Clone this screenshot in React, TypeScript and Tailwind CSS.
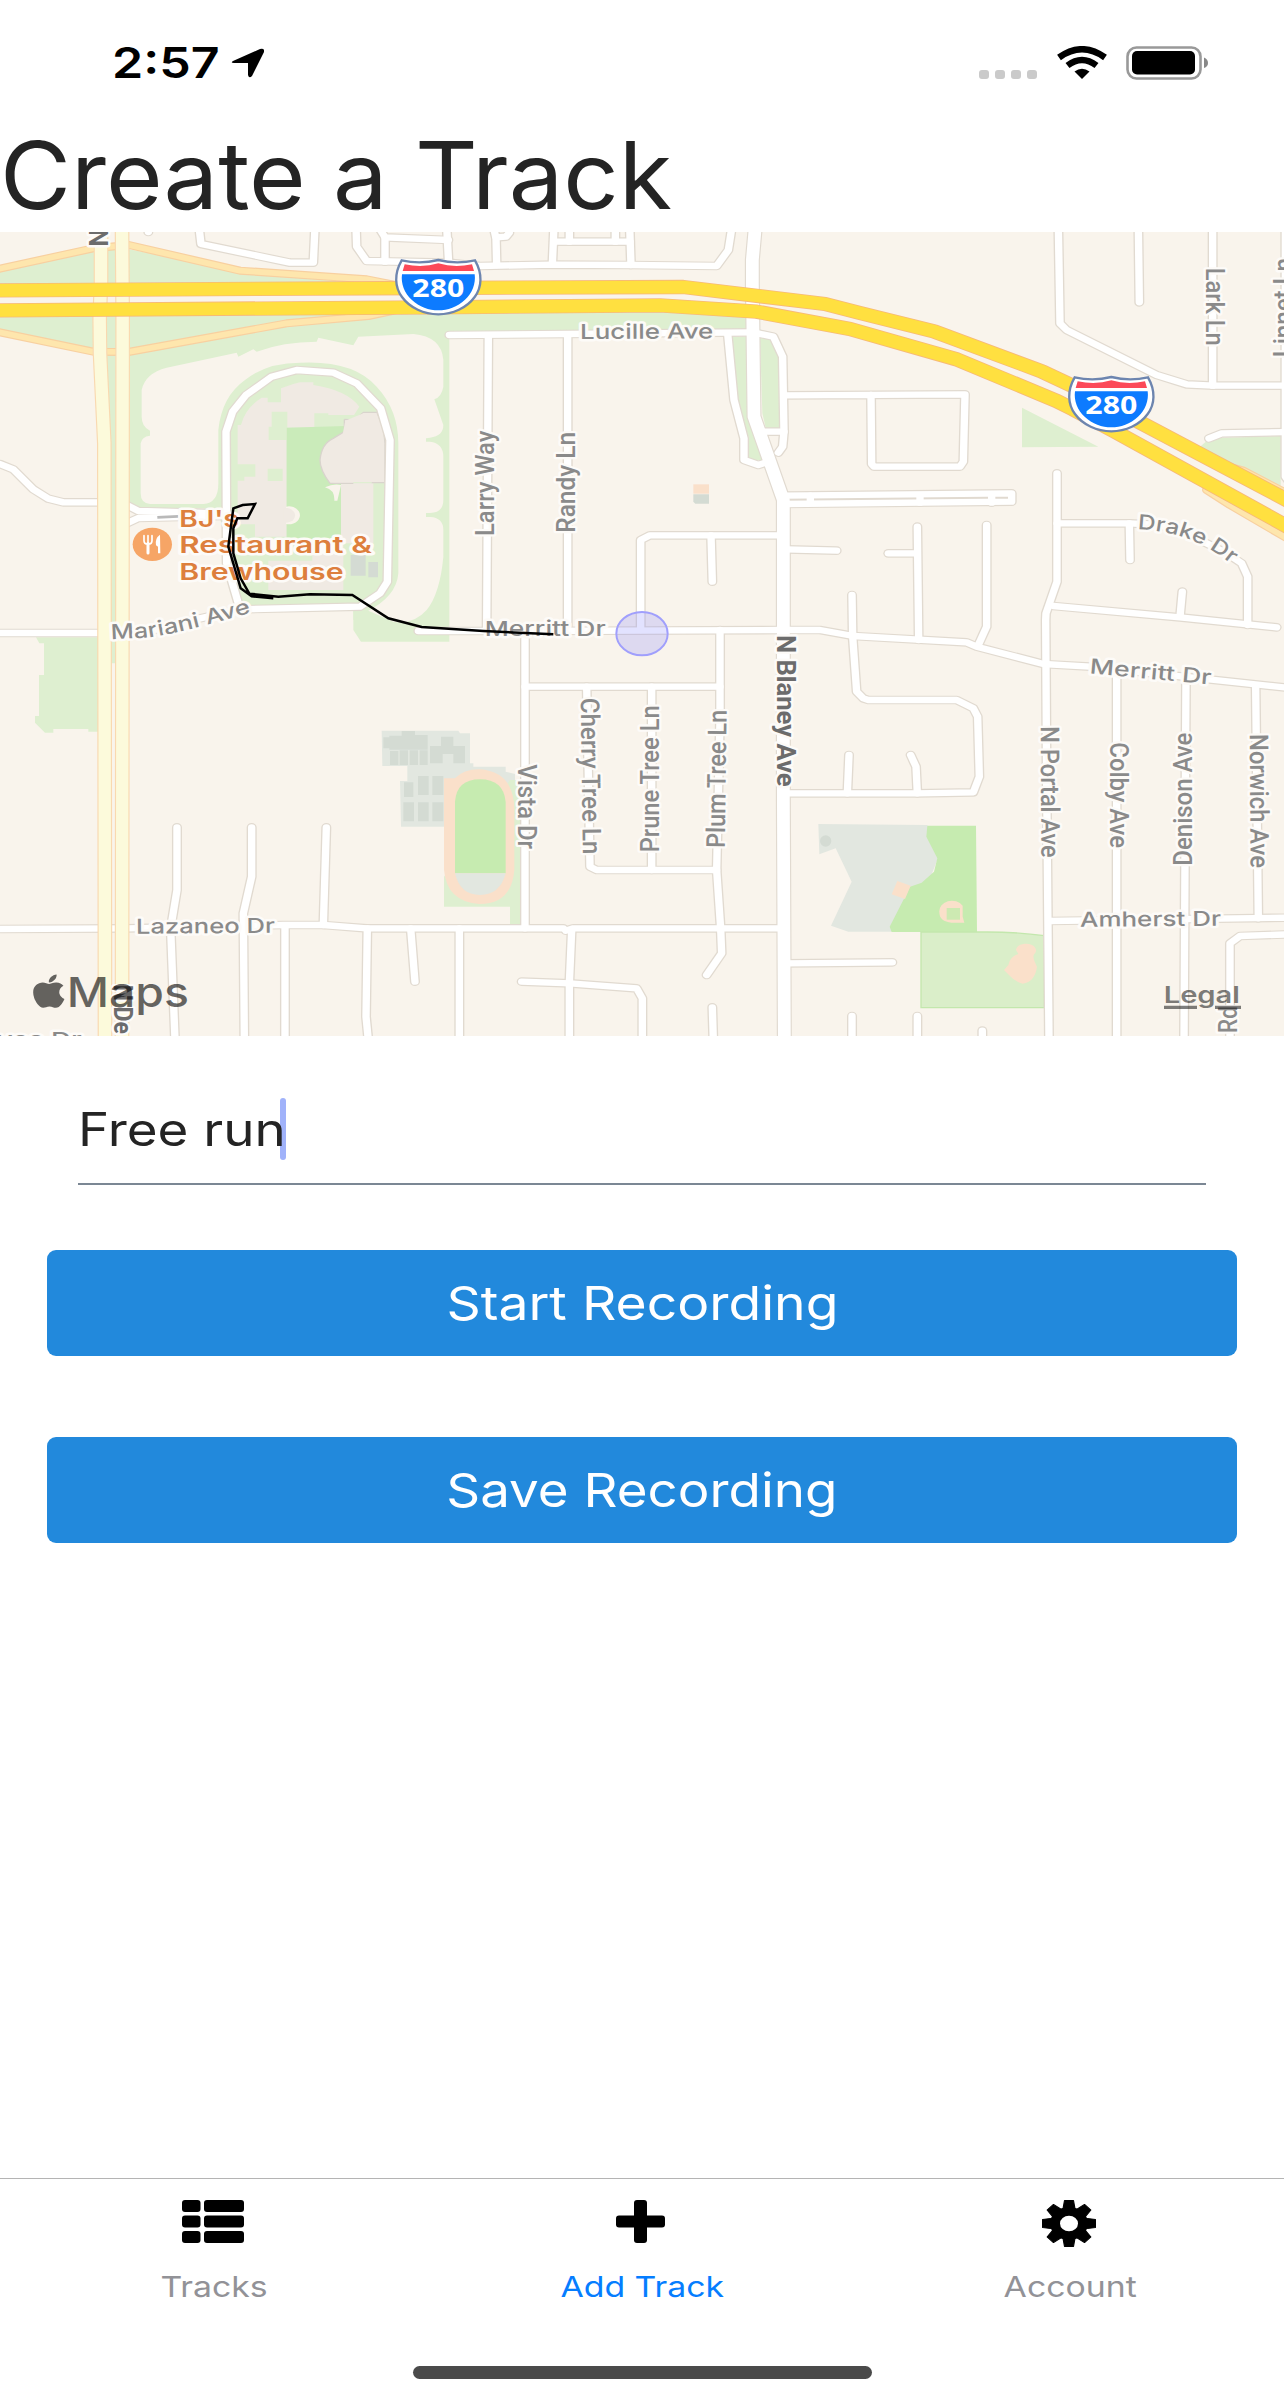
import React from "react";

type Tile = "A" | "B" | "C" | "D" | "E" | "F";
type Line = [Tile, string];

// The map is drawn on a 3 x 2 grid of tiles, each with its own origin.
const ORIGIN: Record<Tile, [number, number]> = {
  A: [0, 0],
  B: [1290, 0],
  C: [2580, 0],
  D: [0, 1170],
  E: [1290, 1170],
  F: [2580, 1170],
};

const STRETCH = 1.158;

// Converts tile points to map points, narrowed so that strokes widen with the stretch group.
function project([tile, pts]: Line): string {
  const [ox, oy] = ORIGIN[tile];
  return pts
    .trim()
    .split(/\s+/)
    .map((p) => {
      const [x, y] = p.split(",").map(Number);
      return `${((x + ox) / STRETCH).toFixed(1)},${y + oy}`;
    })
    .join(" ");
}

const STREETS: Line[] = [
  ["A", "0,702 40,718 100,778 145,806 190,817 300,817"],
  ["A", "380,825 415,843 665,850"],
  ["A", "380,880 415,864 665,858"],
  ["A", "720,1138 680,1000 678,605 698,545 738,495 815,440 890,420 1000,428 1070,460 1142,535 1170,630 1162,1055 1140,1090 1080,1130 720,1138"],
  ["A", "380,1209 480,1197 600,1165 720,1138"],
  ["A", "597,-10 603,42 870,98 940,98 945,-10"],
  ["A", "1068,-10 1070,50 1100,93 1345,98 1440,108 1660,104 1890,105 2150,108 2185,60 2196,-10"],
  ["A", "1135,-10 1155,22 1345,30"],
  ["A", "1155,22 1155,95"],
  ["A", "445,-10 445,6"],
  ["B", "50,-10 56,100"],
  ["B", "190,-10 198,25 200,105"],
  ["B", "198,22 228,20 238,8 235,-10"],
  ["B", "372,-10 367,104"],
  ["B", "372,35 600,35"],
  ["B", "599,-10 603,105"],
  ["B", "418,-10 418,35"],
  ["B", "556,-10 556,35"],
  ["B", "58,315 970,307"],
  ["B", "970,307 1030,320 1058,380 1062,605 1058,650 1045,668"],
  ["B", "1000,605 1062,605"],
  ["B", "893,310 912,510 942,625 942,690 985,705 1015,695"],
  ["B", "175,320 170,1200"],
  ["B", "413,320 413,1200"],
  ["B", "1062,496 1605,493 1600,695 1590,710 1332,710 1325,702 1323,495"],
  ["B", "1060,797 1745,790 1745,815 1060,822"],
  ["B", "632,1200 632,930 660,916 1050,916"],
  ["B", "843,916 847,1055"],
  ["B", "1070,958 1220,962"],
  ["B", "1141,797 1141,820"],
  ["C", "180,797 180,818"],
  ["C", "395,797 395,818"],
  ["C", "595,-10 600,280 620,300 890,435 980,463 1060,467 1290,467"],
  ["C", "835,-10 838,217"],
  ["C", "1058,-10 1058,467"],
  ["C", "1276,-10 1276,740 1290,760"],
  ["C", "1047,625 1085,610 1290,606"],
  ["C", "591,730 591,1055 558,1150 557,1170 560,1670 567,2430"],
  ["C", "591,880 810,880 900,885 1000,920 1100,970 1145,1000 1163,1040 1163,1185"],
  ["C", "808,880 810,990"],
  ["C", "580,1128 960,1162 1250,1192"],
  ["C", "967,1085 960,1160"],
  ["C", "172,890 176,1230"],
  ["C", "85,970 170,970"],
  ["C", "380,885 380,1190 355,1245"],
  ["D", "-10,39 305,39"],
  ["D", "1255,33 1575,33 2350,30 2460,30 2560,48 2900,67 2930,80 3130,132 3270,140 3860,203"],
  ["E", "285,40 285,925"],
  ["E", "285,200 870,200"],
  ["E", "470,200 480,740 500,750 860,750"],
  ["E", "665,200 665,750"],
  ["E", "870,30 870,300 860,750 872,925 875,1000 830,1065"],
  ["D", "-10,927 380,925 850,915 970,915 1100,925 1690,925"],
  ["E", "407,932 430,925 1050,925"],
  ["E", "425,932 418,1090 418,1260"],
  ["E", "275,1085 420,1090 620,1105 637,1135 637,1260"],
  ["E", "88,925 88,1260"],
  ["E", "847,1162 850,1260"],
  ["E", "1070,1030 1387,1027"],
  ["E", "1266,1188 1266,1260"],
  ["E", "1266,-75 1268,50 1280,215 1300,235 1315,240 1580,240 1630,265 1643,290 1648,470 1630,517 1460,520 1070,520"],
  ["E", "1257,405 1252,520"],
  ["F", "152,405 168,440 172,520"],
  ["D", "531,622 531,810 512,925 525,1260"],
  ["D", "755,622 755,770 730,880 733,1260"],
  ["D", "979,622 970,915"],
  ["D", "855,925 855,1260"],
  ["D", "1102,925 1098,1190 1105,1260"],
  ["D", "1232,925 1245,1085"],
  ["F", "770,150 770,1260"],
  ["F", "978,170 972,1260"],
  ["F", "1187,200 1195,895"],
  ["F", "567,903 1290,893"],
  ["F", "1110,1260 1110,970 1140,948 1290,943"],
  ["F", "172,1188 172,1260"],
  ["F", "367,1232 367,1260"],
];

const AVENUE: Line = ["B", "976,-10 967,90 967,160 972,560 1060,810 1060,1700 1063,2430"];
const BOULEVARDS: Line[] = [
  ["A", "303,-10 303,160 299,260 300,370 313,640 315,2430"],
  ["A", "366,-10 368,260 366,2430"],
];
const RAMPS: Line[] = [
  ["A", "-10,118 280,55 387,45 720,122 1100,148 1200,168"],
  ["A", "-10,305 280,365 385,366 860,280 1105,258 1200,238"],
  ["C", "1050,695 1150,722 1290,795"],
  ["C", "1040,780 1110,825 1290,930"],
];
const FREEWAYS: Line[] = [
  ["A", "-10,181 1290,174 2050,171 2475,222 2580,249 2802,304 3125,424 3240,478 3420,577 3870,815"],
  ["A", "-10,241 1290,232 1980,226 2270,245 2550,297 2870,388 3170,513 3220,538 3340,602 3870,894"],
];

function Lines({ items, color, width, round = true }: { items: Line[]; color: string; width: number; round?: boolean }) {
  return (
    <g fill="none" stroke={color} strokeWidth={width} strokeLinejoin="round" strokeLinecap={round ? "round" : "butt"}>
      {items.map((it, i) => (
        <polyline key={i} points={project(it)} />
      ))}
    </g>
  );
}

function Area({ t, d, fill, stroke }: { t: Tile; d: string; fill: string; stroke?: string }) {
  return <path transform={`translate(${ORIGIN[t].join(" ")})`} d={d} fill={fill} stroke={stroke} strokeWidth={stroke ? 4 : undefined} />;
}

interface LabelProps {
  t: Tile;
  x: number;
  y: number;
  len: number;
  rot?: number;
  size?: number;
  weight?: number;
  color?: string;
  font?: string;
  children: string;
}

function Label({ t, x, y, len, rot = 0, size = 62, weight = 500, color = "#8a8a8a", font = "Inter, sans-serif", children }: LabelProps) {
  const [ox, oy] = ORIGIN[t];
  return (
    <text
      transform={`translate(${x + ox} ${y + oy}) rotate(${rot})`}
      fontFamily={font}
      fontSize={size}
      fontWeight={weight}
      fill={color}
      stroke="#fdfbf8"
      strokeWidth={15}
      strokeLinejoin="round"
      paintOrder="stroke"
      textLength={len}
      lengthAdjust="spacingAndGlyphs"
    >
      {children}
    </text>
  );
}

const ROBOTO = "Roboto, sans-serif";

const VERTICAL: { t: Tile; x: number; y: number; len: number; rot: number; text: string; bold?: boolean }[] = [
  { t: "A", x: 268, y: -4, len: 54, rot: 90, text: "N", bold: true },
  { t: "B", x: 193, y: 918, len: 316, rot: -90, text: "Larry Way" },
  { t: "B", x: 434, y: 908, len: 302, rot: -90, text: "Randy Ln" },
  { t: "C", x: 1037, y: 113, len: 234, rot: 90, text: "Lark Ln" },
  { t: "C", x: 1295, y: 382, len: 298, rot: -90, text: "Linnet Ln" },
  { t: "E", x: 264, y: 433, len: 254, rot: 90, text: "Vista Dr" },
  { t: "E", x: 452, y: 234, len: 469, rot: 89.2, text: "Cherry Tree Ln" },
  { t: "E", x: 688, y: 697, len: 441, rot: -90, text: "Prune Tree Ln" },
  { t: "E", x: 884, y: 684, len: 414, rot: -89.2, text: "Plum Tree Ln" },
  { t: "E", x: 1042, y: 45, len: 455, rot: 90, text: "N Blaney Ave", bold: true },
  { t: "F", x: 542, y: 319, len: 394, rot: 89.7, text: "N Portal Ave" },
  { t: "F", x: 751, y: 367, len: 317, rot: 90, text: "Colby Ave" },
  { t: "F", x: 997, y: 737, len: 399, rot: -90, text: "Denison Ave" },
  { t: "F", x: 1169, y: 342, len: 402, rot: 89.6, text: "Norwich Ave" },
  { t: "F", x: 1130, y: 1240, len: 82, rot: -90, text: "Rd" },
  { t: "D", x: 343, y: 1094, len: 148, rot: 90, text: "N De", bold: true },
];

function Shield({ x, y }: { x: number; y: number }) {
  return (
    <g transform={`translate(${x} ${y})`}>
      <path
        d="M17,5 Q72,18 127,4 Q182,18 237,5 C260,45 258,85 236,115 C212,148 170,167 127,167 C84,167 42,148 18,115 C-4,85 -6,45 17,5Z"
        fill="#fff"
        stroke="#6d85af"
        strokeWidth="7"
      />
      <path d="M26,17 Q80,28 127,14 Q174,28 228,17 L234,37 H20Z" fill="#fc4958" />
      <path d="M18,47 H236 C240,75 228,105 207,123 C184,145 155,155 127,155 C99,155 70,145 47,123 C26,105 14,75 18,47Z" fill="#0d7bff" />
      <text x="49" y="116" fontFamily="'Noto Sans', sans-serif" fontWeight="700" fontSize="77" fill="#fff" textLength="156" lengthAdjust="spacingAndGlyphs">
        280
      </text>
    </g>
  );
}

const GREEN = "#deefd0";
const SAND = "#f9f4ec";
const BUILDING = "#f0eae3";
const SLATE = "#d4dbd3";

function Landscape() {
  return (
    <g>
      <Area t="A" fill={GREEN} d="M0,118 L280,58 H387 L720,122 L1150,155 L1290,165 H0Z M0,255 H1290 L387,366 H280 L0,305Z M320,370 H347 V1300 H334Z" />
      <Area t="A" fill={GREEN} d="M387,366 L1290,240 H2240 V305 L1348,315 V1235 H1083 L1060,1200 V1140 L700,835 H387Z" />
      <Area
        t="A"
        fill={SAND}
        d="M425,480 Q435,430 500,413 L710,368 L715,380 L760,358 L770,365 Q850,335 950,335 L955,323 L1060,346 L1075,320 L1240,312 Q1325,320 1330,390 L1330,470 Q1325,500 1303,508 L1330,585 Q1330,618 1290,623 L1278,625 V635 L1290,635 Q1330,640 1330,680 V810 Q1330,848 1290,849 H1278 V861 H1290 Q1330,863 1330,900 V980 Q1320,1090 1280,1140 Q1240,1185 1180,1175 L1100,1140 L700,822 H650 V822 H450 Q422,820 422,790 L422,640 Q425,620 450,617 L450,602 Q425,590 425,560Z"
      />
      <Area t="A" fill={GREEN} d="M655,600 Q665,500 735,450 Q800,398 900,398 Q1060,390 1130,470 Q1195,540 1195,640 L1195,1030 Q1190,1100 1100,1145 L1060,1170 V1130 L720,1150 L690,1000 L655,840 V760 Q655,820 610,822 V835 H655Z" />
      <Area t="A" fill={BUILDING} d="M785,503 H803 V517 H843 V475 L880,462 L900,457 H940 V465 Q1040,480 1078,530 L1062,555 H985 V550 H943 V593 H860 V920 H765 V883 H713 V585 H723 Q735,535 785,503Z" />
      <Area t="A" fill={GREEN} d="M815,545 H862 V593 H860 V630 H806 V590 H815Z M705,703 H766 V740 H733 V752 H705Z M803,716 H848 V753 H803Z" />
      <Area t="A" fill="#caebba" d="M860,593 L1035,588 V760 H1023 V940 L860,925Z" />
      <Area t="A" fill={BUILDING} d="M1023,760 H1120 V940 H1030 V1080 H805 V992 H937 V940 H1023Z" />
      <Area t="A" fill={BUILDING} stroke="#d9d4cd" d="M1033,568 L1065,570 L1090,547 H1130 Q1153,590 1155,640 V758 H1115 M1060,760 H990 Q960,720 960,690 Q965,640 1000,625 L1033,605 V568" />
      <Area t="A" fill={BUILDING} d="M1036,572 L1090,550 H1130 L1152,640 V756 L1000,757Z" />
      <Area t="A" fill={SAND} d="M858,830 a33,27 0 1 1 0,52Z M975,772 Q1000,760 1023,765 L1012,812 L1003,812 Q1005,780 975,772Z" />
      <Area t="A" fill={BUILDING} d="M850,835 a27,22 0 1 1 0,42Z" />
      <Area t="A" fill={SLATE} d="M1052,975 H1097 V1037 H1052Z M1105,996 H1134 V1042 H1105Z" />

      <Area t="B" fill={GREEN} d="M905,320 H950 L957,560 L997,690 H955 V620 L925,510Z M990,320 L1025,330 L1045,380 L1048,597 H1008 L997,550Z" />
      <Area t="B" fill="#fae0ca" d="M790,763 H837 V791 H790Z" />
      <Area t="B" fill={SLATE} d="M790,793 H837 V821 H796 L790,815Z" />
      <Area t="C" fill={GREEN} d="M486,533 L715,650 L486,652Z M1020,650 L1050,625 L1262,618 V768 L1100,700Z" />

      <Area t="D" fill={GREEN} d="M108,52 H295 V335 H265 V327 H160 V338 H135 L105,308 V288 H117 V165 H132 V70 H118Z" />
      <Area t="D" fill="#e2e7e0" d="M1145,332 H1375 L1380,340 H1410 V430 H1420 V440 H1517 V455 L1545,462 V500 L1400,620 H1203 L1200,483 H1222 V438 H1147Z" />
      <Area
        t="D"
        fill={SLATE}
        d="M1150,352 H1168 V347 H1205 V333 H1245 V345 H1283 V389 H1168 V385 H1150Z M1170,393 H1195 V435 H1170Z M1199,391 H1224 V435 H1199Z M1229,391 H1254 V435 H1229Z M1259,391 H1283 V435 H1259Z M1212,487 H1240 V531 H1212Z M1254,468 H1286 V525 H1254Z M1210,547 H1242 V604 H1210Z M1254,547 H1286 V604 H1254Z M1297,468 H1330 V525 H1297Z M1297,547 H1330 V604 H1297Z M1290,378 H1323 V350 H1360 V378 H1395 V430 H1360 V402 H1328 V430 H1290Z"
      />
      <Area t="E" fill={GREEN} d="M42,770 V860 H240 V912 H272 V480 H240Z" />
      <Area t="E" fill="#fae0ca" d="M42,475 H75 Q100,448 148,448 Q253,455 253,570 V750 Q245,852 148,852 Q50,845 42,750Z" />
      <Area t="E" fill="#c6ebb0" d="M75,760 V545 Q80,478 150,478 Q220,478 227,545 V760Z" />
      <Area t="E" fill="#e2e7e0" d="M75,760 H227 Q210,825 150,825 Q90,825 75,760Z" />

      <Area t="F" fill="#e2e7e0" d="M-125,612 L202,615 L240,700 L200,800 L98,935 H-35 L-87,917 L-25,785 L-73,685 L-122,703Z" />
      <Area t="F" fill={SLATE} d="M-120,663 a17,17 0 1 1 34,0 a17,17 0 1 1 -34,0Z" />
      <Area t="F" fill="#c6ebb0" d="M202,617 H348 L351,936 H95 L89,920 L135,830 L150,800 L185,788 L222,755 L232,715 L199,650Z" />
      <Area t="F" fill="#daeec9" stroke="#c3e7ad" d="M183,936 H380 Q470,936 553,947 V1163 H183Z" />
      <Area t="F" fill="#fae0ca" d="M112,783 L152,797 L135,837 L95,823Z M238,877 a38,32 0 0 1 70,-20 V890 L313,908 H275 Q238,905 238,877Z M468,990 a30,20 0 1 1 55,12 Q515,1010 531,1040 Q525,1085 488,1091 Q465,1085 450,1068 L432,1050 L445,1035 Q450,1010 475,1002Z" />
      <Area t="F" fill="#cdeab2" d="M260,864 H300 V899 H260Z" />
    </g>
  );
}

function TrackMap() {
  return (
    <svg viewBox="0 6 3852 2412" preserveAspectRatio="none" className="block h-[804px] w-full shrink-0">
      <rect y="6" width="3852" height="2412" fill={SAND} />
      <Landscape />
      <g transform={`scale(${STRETCH} 1)`}>
        <Lines items={STREETS} color="#e1dad0" width={26} />
        <Lines items={[AVENUE]} color="#e1dad0" width={39} />
        <Lines items={STREETS} color="#ffffff" width={19} />
        <Lines items={[AVENUE]} color="#ffffff" width={33} />
        <Lines items={RAMPS} color="#f8d0a0" width={24} />
        <Lines items={RAMPS} color="#fee6ad" width={17} />
        <Lines items={BOULEVARDS} color="#f9d9b0" width={38} />
        <Lines items={BOULEVARDS} color="#fcfadb" width={32} />
        <Lines items={FREEWAYS} color="#f7b978" width={43} />
        <Lines items={FREEWAYS} color="#ffe040" width={38} />
      </g>
      <path d="M472,862 L535,859" stroke="#b9b9b9" strokeWidth="8" />

      <Label t="B" x={450} y={327} len={400} rot={-0.3}>Lucille Ave</Label>
      <Label t="E" x={164} y={48} len={363}>Merritt Dr</Label>
      <Label t="D" x={408} y={941} len={417} rot={-0.4}>Lazaneo Dr</Label>
      <Label t="F" x={660} y={920} len={423} rot={-0.4}>Amherst Dr</Label>
      <Label t="F" x={688} y={160} len={366} rot={5.2}>Merritt Dr</Label>
      <Label t="D" x={-90} y={1280} len={335}>Alves Dr</Label>
      {VERTICAL.map((v, i) => (
        <Label key={i} t={v.t} x={v.x} y={v.y} len={v.len} rot={v.rot} size={78} weight={v.bold ? 700 : 500} color={v.bold ? "#6c6c6c" : "#8a8a8a"} font={ROBOTO}>
          {v.text}
        </Label>
      ))}

      <defs>
        <path id="mariani" d="M333,1228 L450,1222 Q560,1205 765,1144" />
        <path id="drake" d="M832,898 Q1000,903 1122,1010" transform="translate(2580 0)" />
      </defs>
      <g fontFamily="Inter, sans-serif" fontSize="62" fontWeight="500" fill="#8a8a8a" stroke="#fdfbf8" strokeWidth="15" strokeLinejoin="round" paintOrder="stroke">
        <text textLength="430" lengthAdjust="spacingAndGlyphs">
          <textPath href="#mariani" textLength="430" lengthAdjust="spacingAndGlyphs">Mariani Ave</textPath>
        </text>
        <text textLength="306" lengthAdjust="spacingAndGlyphs">
          <textPath href="#drake" textLength="306" lengthAdjust="spacingAndGlyphs">Drake Dr</textPath>
        </text>
      </g>

      <Shield x={1188} y={86} />
      <Shield x={3207} y={437} />

      <ellipse cx="457" cy="943" rx="59" ry="50" fill="#f6a566" />
      <g fill="none" stroke="#fff" strokeWidth="5" strokeLinecap="round">
        <path d="M432,917 V932 Q432,942 444,942 Q456,942 456,932 V917 M444,917 V940" />
        <path d="M444,940 V969" strokeWidth="9" />
      </g>
      <path d="M480,914 Q464,925 468,946 L474,950 V970 H481Z" fill="#fff" />
      <Label t="A" x={538} y={890} len={178} size={68} weight={600} color="#dd7f3d">BJ's</Label>
      <Label t="A" x={538} y={970} len={578} size={68} weight={600} color="#dd7f3d">Restaurant &amp;</Label>
      <Label t="A" x={538} y={1051} len={493} size={68} weight={600} color="#dd7f3d">Brewhouse</Label>

      <polyline
        points="820,1105 755,1099 722,1075 685,950 700,835 728,825 765,822 743,865 712,865 700,895 700,970 722,1045 748,1091 835,1100 930,1093 1057,1095 1165,1165 1265,1191 1450,1203 1660,1213"
        fill="none"
        stroke="#000"
        strokeWidth="7.5"
      />
      <ellipse cx="1926" cy="1211" rx="77" ry="65" fill="#7a7aff" fillOpacity=".22" stroke="#a09ffc" strokeWidth="6" />

      <g fill="#000" fillOpacity=".6">
        <path
          transform="translate(98.5 2226) scale(.249 .224)"
          d="M318.7 268.7c-.2-36.7 16.4-64.4 50-84.8-18.8-26.9-47.2-41.7-84.7-44.6-35.5-2.8-74.3 20.7-88.5 20.7-15 0-49.4-19.7-76.4-19.7C63.3 141.2 4 184.8 4 273.5q0 39.3 14.4 81.2c12.8 36.7 59 126.7 107.2 125.2 25.2-.6 43-17.9 75.8-17.9 31.8 0 48.3 17.9 76.4 17.9 48.6-.7 90.4-82.5 102.6-119.3-65.2-30.7-61.7-90-61.7-91.9zm-56.6-164.2c27.3-32.4 24.8-61.9 24-72.5-24.1 1.4-52 16.4-67.9 34.9-17.5 19.8-27.8 44.3-25.6 71.9 26.1 2 49.9-11.4 69.5-34.3z"
        />
        <text x="200" y="2331" fontFamily="Inter, sans-serif" fontWeight="500" fontSize="123" textLength="367" lengthAdjust="spacingAndGlyphs">
          Maps
        </text>
        <text x="3491" y="2320" fontFamily="Inter, sans-serif" fontWeight="600" fontSize="68" fillOpacity=".52" textLength="229" lengthAdjust="spacingAndGlyphs">
          Legal
        </text>
        <path d="M3492,2327 H3591 V2337 H3492Z M3645,2327 H3723 V2337 H3645Z" fillOpacity=".5" />
      </g>
    </svg>
  );
}

function StatusBar() {
  return (
    <div className="flex h-[126px] shrink-0 items-start justify-between pl-[112px] pr-[75px]">
      <div className="flex h-[125px] items-center gap-[14px]">
        <span className="inline-block w-[105px] origin-left scale-x-[1.165] whitespace-nowrap text-[43px] font-semibold leading-none text-black">2:57</span>
        <svg viewBox="0 0 33 30" className="h-[30px] w-[33px]">
          <path d="M2,13 L29,1 Q34,0 33,4 L21,28 Q18,31 17,27 V15 H3 Q-1,15 2,13Z" fill="#000" />
        </svg>
      </div>
      <svg viewBox="0 0 230 34" preserveAspectRatio="none" className="mt-[46px] h-[34px] w-[230px]">
        <g fill="#cacaca">
          <rect x="0" y="24" width="10" height="9" rx="3" />
          <rect x="16" y="24" width="10" height="9" rx="3" />
          <rect x="32" y="24" width="10" height="9" rx="3" />
          <rect x="48" y="24" width="10" height="9" rx="3" />
        </g>
        <g fill="none" stroke="#000" strokeWidth="6.5">
          <path d="M80,11.5 Q103,-5 126,11.5" />
          <path d="M88.5,19.5 Q103,8.5 117.500,19.5" />
        </g>
        <path d="M95.500,25.500 Q103,20 110.500,25.500 L103,33Z" fill="#000" />
        <rect x="148.500" y="1.500" width="73" height="31" rx="9" fill="none" stroke="#999" strokeWidth="2.600" />
        <rect x="153" y="5" width="63" height="23.500" rx="5" fill="#000" />
        <path d="M225,11.500 Q229,13 229,17 Q229,20.500 225,22Z" fill="#888" />
      </svg>
    </div>
  );
}

function ActionButton({ children, fit }: { children: string; fit: string }) {
  return (
    <button className="flex h-[106px] w-full items-center justify-center rounded-[9px] bg-[#2289dc] pb-px text-[47px] leading-none text-white">
      <span className={`whitespace-nowrap ${fit}`}>{children}</span>
    </button>
  );
}

function ListIcon() {
  return (
    <svg viewBox="0 0 62 43" className="h-[43px] w-[62px]">
      {[0, 15.5, 31].map((y) => (
        <g key={y}>
          <rect y={y} width="18.500" height="12" rx="3" />
          <rect x="22" y={y} width="40" height="12" rx="3" />
        </g>
      ))}
    </svg>
  );
}

function PlusIcon() {
  return (
    <svg viewBox="0 0 49 43" className="h-[43px] w-[49px]">
      <rect x="18" width="13" height="43" rx="3" />
      <rect y="15.500" width="49" height="12" rx="3" />
    </svg>
  );
}

function GearIcon() {
  return (
    <svg viewBox="-24 -24 48 48" preserveAspectRatio="none" className="h-[47px] w-[54px]">
      {[0, 45, 90, 135, 180, 225, 270, 315].map((a) => (
        <path key={a} d="M-4,-23.500 H4 L5.500,-14 H-5.500Z" transform={`rotate(${a})`} strokeLinejoin="round" stroke="#000" />
      ))}
      <circle r="16.800" />
      <circle r="8" fill="#fff" />
    </svg>
  );
}

function Tab({ icon, label, active }: { icon: React.ReactNode; label: string; active?: boolean }) {
  return (
    <div className="flex flex-1 flex-col items-center pt-[21px]">
      <div className="mr-[3px] flex h-[47px] items-start">{icon}</div>
      <span className={`mt-[22px] scale-x-[1.165] whitespace-nowrap text-[29px] leading-[36px] ${active ? "text-[#057dff]" : "text-[#929297]"}`}>{label}</span>
    </div>
  );
}

export default function App() {
  return (
    <div className="flex h-[2400px] w-[1284px] flex-col overflow-hidden bg-white font-['Inter',sans-serif]">
      <StatusBar />
      <h1 className="h-[106px] shrink-0 origin-left scale-x-[1.045] whitespace-nowrap text-[93px] leading-[99px] text-[#242424]">Create a Track</h1>
      <TrackMap />
      <main className="flex grow flex-col px-[47px]">
        <div className="mx-[31px] mt-[46px] flex h-[103px] items-start border-b-2 border-[#7b8794] pt-[16px]">
          <span className="w-[202px] origin-left scale-x-[1.15] whitespace-nowrap text-[46px] leading-[62px] text-[#242424]">Free run</span>
          <span className="h-[62px] w-[6px] rounded-sm bg-[#a0b2fa]" />
        </div>
        <div className="mt-[65px] flex flex-col gap-[81px]">
          <ActionButton fit="scale-x-[1.137]">Start Recording</ActionButton>
          <ActionButton fit="scale-x-[1.125]">Save Recording</ActionButton>
        </div>
      </main>
      <nav className="flex h-[222px] shrink-0 flex-col border-t border-[#b4b4b4]">
        <div className="flex h-[187px] shrink-0">
          <Tab icon={<ListIcon />} label="Tracks" />
          <Tab icon={<PlusIcon />} label="Add Track" active />
          <Tab icon={<GearIcon />} label="Account" />
        </div>
        <div className="mx-auto h-[13px] w-[459px] rounded-full bg-[#4a4a4a]" />
      </nav>
    </div>
  );
}
